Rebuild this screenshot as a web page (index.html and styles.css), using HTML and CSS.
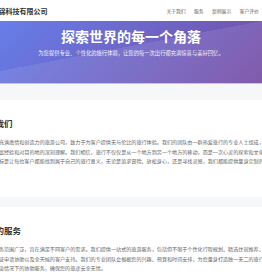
FILE: index.html
```html
<!DOCTYPE html>
<html lang="zh-CN">

<head>
    <meta charset="UTF-8">
    <meta name="viewport" content="width=device-width, initial-scale=1.0">
    <title>上海华锦科技有限公司</title>
    <link rel="stylesheet" href="styles.css">
</head>

<body>
    <header class="site-header">
        <div class="header-inner">
            <div class="logo">上海华锦科技有限公司</div>
            <nav class="nav">
                <a href="#about">关于我们</a>
                <a href="#services">服务</a>
                <a href="#cases">案例展示</a>
                <a href="#reviews">客户评价</a>
            </nav>
        </div>
    </header>

    <section class="hero">
        <h1>探索世界的每一个角落</h1>
        <p>为您提供专业、个性化的旅行体验，让您的每一次出行都充满惊喜与美好回忆。</p>
    </section>

    <main class="content">
        <section class="card" id="about">
            <div class="card-inner">
                <h2>关于我们</h2>
                <p>
                    作为一家充满激情和创造力的旅游公司，致力于为客户提供无与伦比的旅行体验。我们的团队由一群热爱旅行的专业人士组成，<br>
                    均拥有丰富经验和对目的地的深刻理解。我们相信，旅行不仅仅是从一个地方到另一个地方的移动，而是一次心灵的探索和文化的交流。<br>
                    我们的目标是让每位客户都能找到属于自己的旅行意义，无论是追求冒险、放松身心，还是寻找灵感，我们都能提供量身定制的方案。
                </p>
            </div>
        </section>

        <section class="card" id="services">
            <div class="card-inner">
                <h2>我们的服务</h2>
                <p>
                    我们的服务范围广泛，旨在满足不同客户的需求。我们提供一站式的旅游服务，包括但不限于个性化行程规划、精选住宿推荐、<br>
                    航班及签证申请协助以及全天候的客户支持。我们的专业团队会根据您的兴趣、预算和时间安排，为您量身打造独一无二的旅行方案，<br>
                    以及在紧急情况下的协助服务，确保您的旅途安全无忧。
                </p>
            </div>
        </section>
    </main>
</body>

</html>
```

FILE: styles.css
```css
* {
    margin: 0;
    padding: 0;
    box-sizing: border-box;
}

body {
    font-family: "Noto Sans CJK SC", "Noto Sans", sans-serif;
    background: #f6f7f9;
    color: #333;
    overflow: hidden;
}

a {
    text-decoration: none;
}

/* 상단 헤더 */
.site-header {
    background: #fff;
}

.header-inner {
    display: flex;
    justify-content: space-between;
    align-items: center;
    height: 21px;
    margin-left: -22.5px;
    padding-right: 3.2px;
}

.logo {
    font-size: 7px;
    font-weight: 700;
    color: #333;
    white-space: nowrap;
}

.nav {
    display: flex;
    gap: 8.4px;
}

.nav a {
    font-size: 4.8px;
    color: #666;
    white-space: nowrap;
}

/* 메인 배너 */
.hero {
    height: 63px;
    padding-top: 6.5px;
    text-align: center;
    color: #fff;
    border-bottom: 1px solid #c9c0e6;
    background:
        linear-gradient(to top left, rgba(255, 255, 255, 0.09) 50%, transparent 50%) right top / 124% 100% no-repeat,
        linear-gradient(135deg, #667eea 0%, #764ba2 100%);
}

.hero h1 {
    font-size: 14px;
    line-height: 17px;
    font-weight: 700;
    white-space: nowrap;
}

.hero p {
    margin-top: 4.5px;
    font-size: 5.3px;
    line-height: 8px;
    opacity: 0.92;
    white-space: nowrap;
}

/* 본문 */
.content {
    padding-top: 16px;
}

.card {
    background: #fff;
    margin-bottom: 10px;
    padding: 18px 0 31px;
}

.card-inner {
    margin-left: -21.5px;
}

.card h2 {
    font-size: 8.5px;
    line-height: 10px;
    font-weight: 700;
    color: #333;
    margin-bottom: 9.25px;
}

.card p {
    font-size: 5.1px;
    line-height: 9.5px;
    color: #666;
    white-space: nowrap;
}
```
